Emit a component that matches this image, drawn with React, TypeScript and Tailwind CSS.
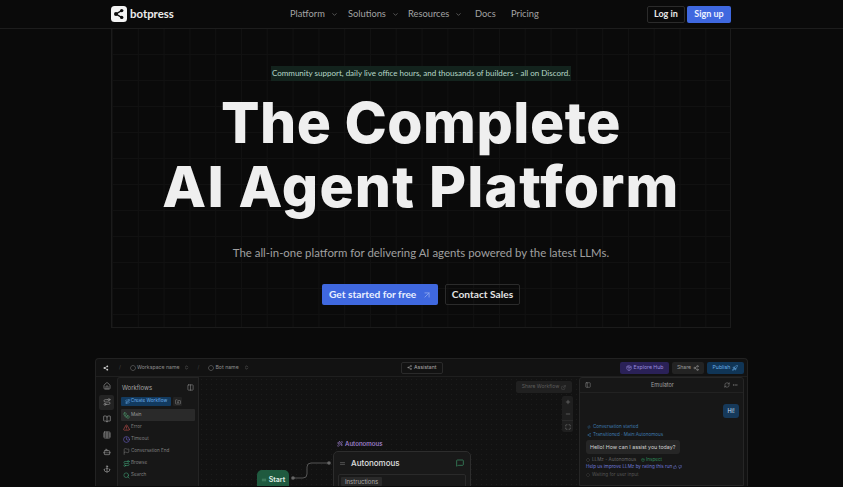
import React from 'react';
import {
  Anchor, ArrowUpRight, BookOpen, Bot, ChevronDown, ChevronsUpDown, CircleDashed, Clock, Columns2, ExternalLink,
  FolderPlus, Home, Maximize, Minus, MoreHorizontal, Package, PanelLeft, Plus, RefreshCw, Route, Share2, Table,
  ThumbsDown, ThumbsUp, TriangleAlert, Workflow, Zap, MessageSquare, Equal, Rocket, Search, Flag, Wand2,
} from 'lucide-react';

const NAV = [
  { label: 'Platform', caret: true, cls: 'w-[58px]' },
  { label: 'Solutions', caret: true, cls: 'w-[60px]' },
  { label: 'Resources', caret: true, cls: 'w-[67px]' },
  { label: 'Docs', caret: false, cls: 'w-[36px]' },
  { label: 'Pricing', caret: false, cls: 'w-auto' },
];

const Logo: React.FC<{ size: number; dark?: boolean }> = ({ size, dark }) => (
  <svg width={size} height={size} viewBox="0 0 16 16">
    {dark ? null : <rect width="16" height="16" rx="3.5" fill="#f4f4f4" />}
    <g fill={dark ? '#c8c8c8' : '#0b0b0b'} stroke={dark ? '#c8c8c8' : '#0b0b0b'}>
      <path d="M5 8 L10.5 4.6 M5 8 L10.5 11.4" strokeWidth="1.4" />
      <circle cx="5" cy="8" r="2" stroke="none" />
      <circle cx="10.7" cy="4.6" r="1.7" stroke="none" />
      <circle cx="10.7" cy="11.4" r="1.7" stroke="none" />
    </g>
  </svg>
);

const Header: React.FC = () => (
  <header className="h-[29px] border-b border-[#1d1d1d] flex items-center pl-[111px]">
    <div className="w-[620px] flex items-center font-['Lato',sans-serif]">
      <Logo size={16} />
      <span className="ml-[3px] text-[11.4px] font-bold text-[#ececec] w-[160px] leading-none">botpress</span>
      <nav className="flex items-center text-[9.3px] text-[#a3a3a3]">
        {NAV.map((n) => (
          <div key={n.label} className={`flex items-center ${n.cls}`}>
            <span>{n.label}</span>
            {n.caret && <ChevronDown size={7} className="ml-[6px] text-[#8a8a8a]" />}
          </div>
        ))}
      </nav>
      <div className="ml-auto flex items-center gap-[2px] text-[9px] font-bold">
        <button className="h-[17px] w-[38px] rounded-[2px] border border-[#2b2b2b] text-[#e8e8e8]">Log in</button>
        <button className="h-[17px] w-[44px] rounded-[2px] bg-[#3f68df] text-[#eef2ff]">Sign up</button>
      </div>
    </div>
  </header>
);

const Hero: React.FC = () => (
  <section className="ml-[111px] w-[620px] h-[299px] border-x border-b border-[#1b1b1b] bg-[linear-gradient(#111111_1px,transparent_1px),linear-gradient(90deg,#111111_1px,transparent_1px)] bg-[size:25.8px_26px] bg-[position:0_25px] flex flex-col items-center">
    <div className="mt-[37px] h-[15px] w-[300px] bg-[#13231d] text-[#b7d8c8] text-[8px] leading-[15px] text-center whitespace-nowrap font-['Lato',sans-serif]">
      Community support, daily live office hours, and thousands of builders - all on Discord.
    </div>
    <h1 className="mt-[10px] text-center text-[#efefef] font-extrabold text-[57px] leading-[64px] tracking-[0.5px] whitespace-nowrap">
      The Complete
      <br />
      <span className="tracking-[1.2px]">AI Agent Platform</span>
    </h1>
    <p className="mt-[25px] text-[11.4px] leading-[18px] text-[#a0a0a0] whitespace-nowrap font-['Lato',sans-serif]">
      The all-in-one platform for delivering AI agents powered by the latest LLMs.
    </p>
    <div className="mt-[22px] flex gap-[7px] text-[10.2px] font-bold font-['Lato',sans-serif]">
      <button className="h-[21px] w-[116px] rounded-[2px] bg-[#3f68df] text-[#eaf0ff] flex items-center justify-between pl-[7px] pr-[6px] whitespace-nowrap">
        Get started for free
        <ArrowUpRight size={10} className="text-[#8ea7ee]" />
      </button>
      <button className="h-[21px] w-[75px] rounded-[2px] border border-[#2b2b2b] text-[#e4e4e4] whitespace-nowrap">Contact Sales</button>
    </div>
  </section>
);

const WORKFLOWS = [
  { label: 'Main', icon: <Workflow size={7} className="text-[#4f9c6e]" />, active: true },
  { label: 'Error', icon: <TriangleAlert size={7} className="text-[#c9524f]" /> },
  { label: 'Timeout', icon: <Clock size={7} className="text-[#6d63c9]" /> },
  { label: 'Conversation End', icon: <Flag size={7} className="text-[#777]" /> },
  { label: 'Browse', icon: <Route size={7} className="text-[#3f9b73]" /> },
  { label: 'Search', icon: <Search size={7} className="text-[#3f9b73]" /> },
];

const RAIL = [Home, Route, BookOpen, Table, Bot, Anchor];

const Rail: React.FC = () => (
  <div className="w-[21px] shrink-0 flex flex-col items-center pt-[1px] gap-[1.67px]">
    {RAIL.map((Icon, i) => (
      <div key={i} className={`w-[15px] h-[15px] rounded-[2px] flex items-center justify-center ${i === 1 ? 'bg-[#232323]' : ''}`}>
        <Icon size={8} className="text-[#9a9a9a]" />
      </div>
    ))}
  </div>
);

const WorkflowsPanel: React.FC = () => (
  <aside className="w-[82px] shrink-0 bg-[#171717] border-l border-r border-t border-[#242424] rounded-tl-[3px] px-[3px]">
    <div className="flex items-center justify-between h-[17px] px-[1px] text-[6px] text-[#a5a5a5] mt-[1px]">
      <span>Workflows</span>
      <Columns2 size={7} className="text-[#8a8a8a]" />
    </div>
    <div className="flex items-center gap-[2px] mt-[1px]">
      <div className="h-[9px] w-[50px] bg-[#123a5f] rounded-[1px] flex items-center justify-center gap-[1px] text-[4.6px] text-[#6fb0ea] whitespace-nowrap">
        <Route size={5} />
        Create Workflow
      </div>
      <div className="h-[9px] w-[9px] bg-[#222] rounded-[1px] flex items-center justify-center">
        <FolderPlus size={6} className="text-[#8a8a8a]" />
      </div>
    </div>
    <div className="mt-[3px] flex flex-col gap-[0.1px]">
      {WORKFLOWS.map((w) => (
        <div
          key={w.label}
          className={`h-[12px] flex items-center gap-[1px] pl-[2px] text-[4.6px] text-[#7f7f7f] rounded-[1px] whitespace-nowrap ${w.active ? 'bg-[#2a2a2a] text-[#9a9a9a]' : ''}`}
        >
          {w.icon}
          {w.label}
        </div>
      ))}
    </div>
  </aside>
);

const Canvas: React.FC = () => (
  <div className="relative flex-1 bg-[#121212] bg-[radial-gradient(#1c1c1c_0.6px,transparent_0.6px)] bg-[size:5px_5px] overflow-hidden">
    <div className="absolute top-[4px] right-[7px] h-[12px] w-[56px] bg-[#202020] rounded-[2px] flex items-center justify-center gap-[2px] text-[5px] text-[#5d5d5d] whitespace-nowrap">
      Share Workflow
      <ExternalLink size={5} />
    </div>
    <div className="absolute top-[19px] right-[6px] w-[11px] flex flex-col bg-[#1f1f1f] rounded-[2px] text-[#8a8a8a]">
      <div className="h-[12px] flex items-center justify-center"><Plus size={6} /></div>
      <div className="h-[12px] flex items-center justify-center"><Minus size={6} /></div>
      <div className="h-[12px] flex items-center justify-center border-t border-[#2a2a2a]"><Maximize size={6} /></div>
    </div>

    {/* nodes sit on the free canvas */}
    <div className="absolute left-[58px] top-[93px] h-[20px] w-[32px] rounded-[5px] bg-[#1f5a3f] flex items-center justify-center gap-[2px] text-[7px] font-semibold text-[#dfeee6]">
      <Equal size={6} className="text-[#6fae8d]" />
      Start
    </div>
    <svg className="absolute left-[92px] top-[82px]" width="42" height="24" viewBox="0 0 42 24" fill="none">
      <path d="M2 19 H12 Q16 19 16 15 V8 Q16 4 20 4 H38" stroke="#555" strokeWidth="1" />
      <circle cx="2" cy="19" r="1.8" fill="#666" />
      <circle cx="38" cy="4" r="1.8" fill="#666" />
    </svg>
    <div className="absolute left-[138px] top-[62px] flex items-center gap-[2px] text-[6.2px] font-medium text-[#a98add]">
      <Wand2 size={6} />
      Autonomous
    </div>
    <div className="absolute left-[134px] top-[74px] w-[138px] h-[60px] bg-[#191919] border border-[#2d2d2d] rounded-[5px] px-[4px]">
      <div className="h-[22px] flex items-center text-[8px] font-medium text-[#e0e0e0]">
        <Equal size={7} className="text-[#777] ml-[1px] mr-[5px]" />
        Autonomous
        <MessageSquare size={8} className="ml-auto text-[#3f9b6c] mr-[2px]" />
      </div>
      <div className="border border-[#2a2a2a] rounded-[2px] h-[30px] p-[2px]">
        <span className="block w-[41px] h-[9px] bg-[#2a2a2a] rounded-[1px] text-[6px] leading-[9px] text-center text-[#aaa]">Instructions</span>
      </div>
    </div>
  </div>
);

const Emulator: React.FC = () => (
  <aside className="w-[165px] shrink-0 bg-[#171717] border border-[#262626] rounded-t-[3px] px-[6px]">
    <div className="h-[15px] flex items-center justify-between text-[5.5px] text-[#a0a0a0] border-b border-[#222] -mx-[6px] px-[5px]">
      <PanelLeft size={6} className="text-[#888]" />
      <span className="ml-[10px]">Emulator</span>
      <div className="flex items-center gap-[2px] text-[#888]">
        <RefreshCw size={6} />
        <MoreHorizontal size={6} />
      </div>
    </div>
    <div className="flex justify-end mt-[11px] mr-[-2px]">
      <span className="h-[14px] w-[16px] bg-[#16395a] rounded-[3px] text-[5.5px] leading-[14px] text-center text-[#cfe2f5]">Hi!</span>
    </div>
    <div className="mt-[5px] text-[4.6px] leading-[8px] text-[#3e79ad] whitespace-nowrap">
      <div className="flex items-center gap-[2px] pl-[1px]"><Zap size={4} />Conversation started</div>
      <div className="flex items-center gap-[2px] pl-[1px]"><Share2 size={4} />Transitioned · Main:Autonomous</div>
    </div>
    <div className="mt-[1px] h-[14px] w-[94px] bg-[#262626] rounded-[3px] text-[5.3px] leading-[14px] pl-[4px] text-[#d2d2d2] whitespace-nowrap">
      Hello! How can I assist you today?
    </div>
    <div className="mt-[2px] flex items-center gap-[2px] text-[4.6px] leading-[7px] text-[#666] whitespace-nowrap">
      <CircleDashed size={4} />
      LLMz - Autonomous
      <span className="ml-[3px] text-[#2f8a58] flex items-center gap-[1px]"><Package size={4} />Inspect</span>
    </div>
    <div className="flex items-center gap-[1px] text-[4.6px] leading-[7px] text-[#6e78d8] whitespace-nowrap">
      Help us improve LLMz by rating this run
      <ThumbsUp size={4} />
      <ThumbsDown size={4} />
    </div>
    <div className="mt-[1px] flex items-center gap-[2px] text-[4.6px] leading-[7px] text-[#555] whitespace-nowrap">
      <CircleDashed size={4} />
      Waiting for user input
    </div>
  </aside>
);

const AppWindow: React.FC = () => (
  <div className="ml-[95px] mt-[30px] w-[653px] h-[128px] bg-[#121212] border border-[#222] border-b-0 rounded-t-[4px] flex flex-col overflow-hidden">
    <div className="h-[18px] shrink-0 flex items-center pl-[6px] pr-[3px] border-b border-[#1f1f1f] text-[5.2px] text-[#8d8d8d] whitespace-nowrap">
      <Logo size={8} dark />
      <span className="ml-[9px] text-[#444]">/</span>
      <CircleDashed size={6} className="ml-[9px]" />
      <span className="ml-[1px]">Workspace name</span>
      <ChevronsUpDown size={5} className="ml-[4px]" />
      <span className="ml-[9px] text-[#444]">/</span>
      <CircleDashed size={6} className="ml-[9px]" />
      <span className="ml-[1px]">Bot name</span>
      <ChevronsUpDown size={5} className="ml-[5px]" />
      <div className="ml-[152px] h-[12px] w-[42px] border border-[#2a2a2a] rounded-[2px] flex items-center justify-center gap-[2px] text-[#a8a8a8]">
        <Share2 size={5} />
        Assistant
      </div>
      <div className="ml-auto flex items-center gap-[3px]">
        <div className="h-[12px] w-[49px] bg-[#2a2157] rounded-[2px] flex items-center justify-center gap-[2px] text-[#9a8cdf]">
          <Package size={6} />
          Explore Hub
        </div>
        <div className="h-[12px] w-[32px] bg-[#232323] rounded-[2px] flex items-center justify-center gap-[2px] text-[#9a9a9a]">
          Share
          <Share2 size={6} />
        </div>
        <div className="h-[12px] w-[37px] bg-[#103556] rounded-[2px] flex items-center justify-center gap-[2px] text-[#6aaee8]">
          Publish
          <Rocket size={6} />
        </div>
      </div>
    </div>
    <div className="flex-1 flex min-h-0">
      <Rail />
      <WorkflowsPanel />
      <Canvas />
      <Emulator />
      <div className="w-[3px] shrink-0" />
    </div>
  </div>
);

export default function App() {
  return (
    <div className="h-[487px] overflow-hidden bg-[#0a0a0a] font-['Inter',sans-serif]">
      <Header />
      <Hero />
      <AppWindow />
    </div>
  );
}
